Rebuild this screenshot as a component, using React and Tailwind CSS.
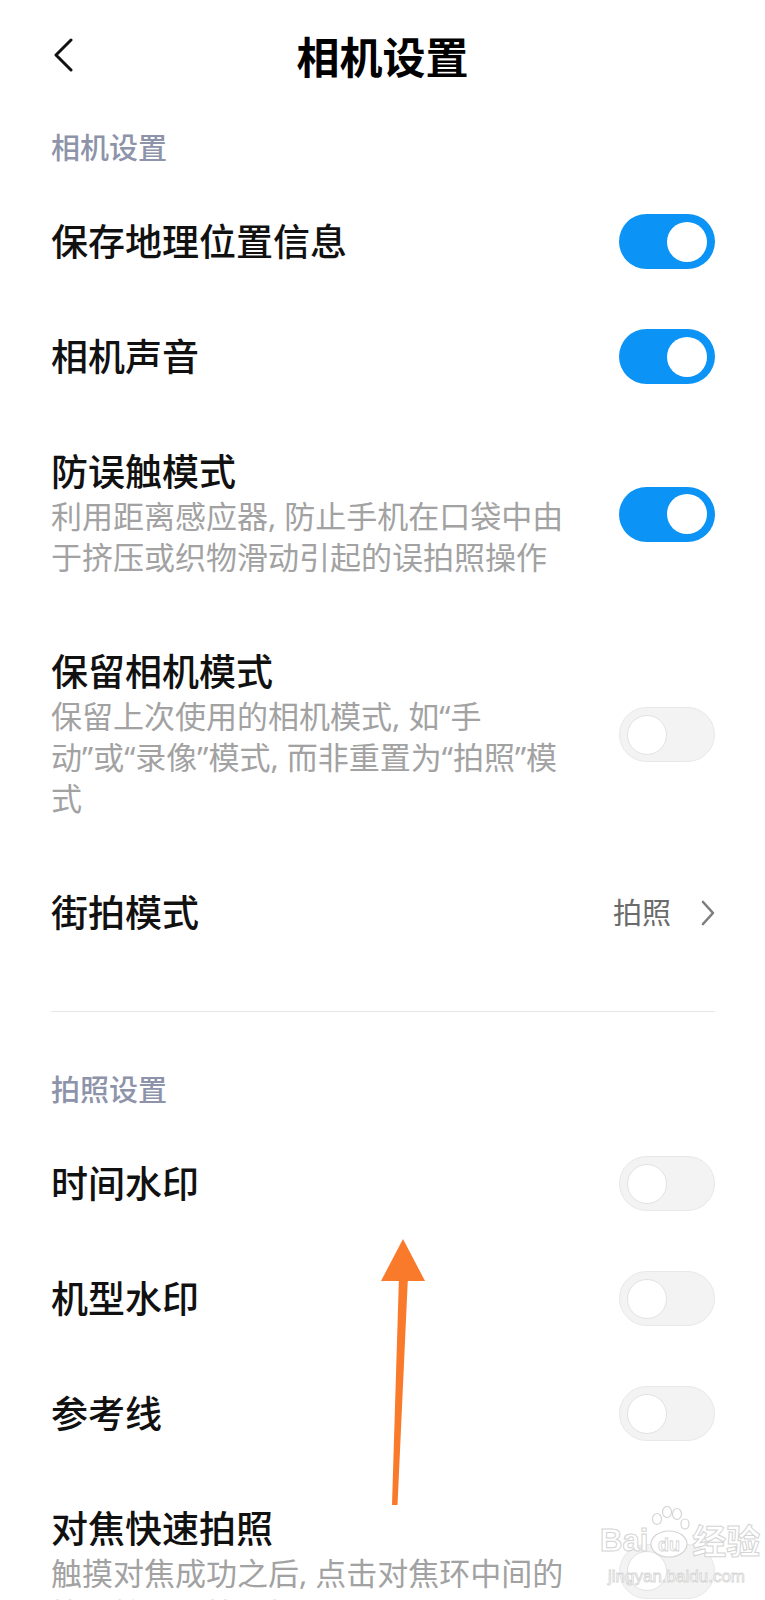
import React from "react";

const FONT = { fontFamily: '"Noto Sans", "Noto Sans CJK SC", sans-serif' };

function Toggle({ on }) {
  if (on) {
    return (
      <div className="w-[96px] h-[55px] rounded-full bg-[#0b93f6] flex items-center justify-end pr-[8px] shrink-0">
        <div className="w-[40px] h-[40px] rounded-full bg-white" />
      </div>
    );
  }
  return (
    <div className="w-[96px] h-[55px] rounded-full bg-[#f3f3f3] border border-[#e8e8e8] flex items-center justify-start pl-[7px] shrink-0">
      <div className="w-[40px] h-[40px] rounded-full bg-white border border-[#e2e2e2]" />
    </div>
  );
}

function SectionTitle({ children, className = "" }) {
  return (
    <div className={"pb-[18px] " + className}>
      <div className="h-[36px] flex items-center text-[29px] font-medium text-[#8d93a9]">{children}</div>
    </div>
  );
}

function Row({ title, lines = [], on, right }) {
  return (
    <div className="flex items-center justify-between py-[30px]">
      <div className="min-w-0 py-[6px]">
        <div className="h-[43px] flex items-center text-[37px] font-medium text-[#111]">{title}</div>
        {lines.length > 0 && (
          <div className="mt-[3px] text-[31px] text-[#a2a2a2] whitespace-nowrap">
            {lines.map((l, i) => (
              <div key={i} className="h-[41px] flex items-center">
                {l}
              </div>
            ))}
          </div>
        )}
      </div>
      {right ? right : <Toggle on={on} />}
    </div>
  );
}

export default function App() {
  return (
    <div className="relative w-[765px] h-[1600px] overflow-hidden bg-white" style={FONT}>
      {/* top bar */}
      <div className="grid grid-cols-[1fr_auto_1fr] items-center h-[116px] px-[51px]">
        <div className="flex items-center">
          <svg width="22" height="34" viewBox="0 0 22 34" className="ml-[1px] mb-[6px]">
            <polyline points="19,2 4,17 19,32" fill="none" stroke="#111" strokeWidth="3" strokeLinecap="round" strokeLinejoin="round" />
          </svg>
        </div>
        <div className="h-[52px] flex items-center text-[43px] font-bold text-black">相机设置</div>
        <div />
      </div>

      <div className="pl-[51px] pr-[50px]">
        <SectionTitle className="pt-[14px]">相机设置</SectionTitle>
        <Row title="保存地理位置信息" on />
        <Row title="相机声音" on />
        <Row
          title="防误触模式"
          lines={["利用距离感应器, 防止手机在口袋中由", "于挤压或织物滑动引起的误拍照操作"]}
          on
        />
        <Row
          title="保留相机模式"
          lines={["保留上次使用的相机模式, 如“手", "动”或“录像”模式, 而非重置为“拍照”模", "式"]}
        />
        <Row
          title="街拍模式"
          right={
            <div className="flex items-center gap-[30px]">
              <span className="h-[40px] flex items-center text-[29px] text-[#6b6b6b]">拍照</span>
              <svg width="14" height="26" viewBox="0 0 14 26">
                <polyline points="2,2 12,13 2,24" fill="none" stroke="#7d7d7d" strokeWidth="2.6" strokeLinecap="round" strokeLinejoin="round" />
              </svg>
            </div>
          }
        />

        <div className="mt-[41px] h-px bg-[#e6e6e6]" />

        <SectionTitle className="mt-[60px]">拍照设置</SectionTitle>
        <Row title="时间水印" />
        <Row title="机型水印" />
        <Row title="参考线" />
        <Row
          title="对焦快速拍照"
          lines={["触摸对焦成功之后, 点击对焦环中间的", "快门按钮可快速拍照"]}
        />
      </div>

      {/* orange annotation arrow */}
      <svg className="absolute left-0 top-0 pointer-events-none" width="765" height="1600" viewBox="0 0 765 1600">
        <polygon points="392,1505 397.5,1505 408,1276 399,1276" fill="#fa7a2b" />
        <polygon points="403,1239 381,1281 425,1281" fill="#fa7a2b" />
      </svg>

      {/* watermark */}
      <div className="absolute left-[600px] top-[1506px] pointer-events-none select-none whitespace-nowrap">
        <div className="flex items-end">
          <span className="text-[31px] leading-[34px] font-bold text-white [-webkit-text-stroke:1px_#d4d4d4]" style={{ fontFamily: '"Liberation Sans", sans-serif' }}>
            Bai
          </span>
          <svg width="42" height="52" viewBox="0 0 42 52" className="shrink-0">
            <g fill="white" stroke="#d4d4d4" strokeWidth="1.2">
              <ellipse cx="9" cy="13" rx="4.5" ry="5.5" />
              <ellipse cx="19" cy="6" rx="4.5" ry="5.5" />
              <ellipse cx="29" cy="8" rx="4.5" ry="5.5" />
              <ellipse cx="37" cy="18" rx="4" ry="5" />
              <ellipse cx="21" cy="38" rx="18" ry="13" />
            </g>
            <text x="21" y="45" textAnchor="middle" fontSize="18" fontWeight="bold" fill="white" stroke="#d4d4d4" strokeWidth="0.8" fontFamily="Liberation Sans, sans-serif">du</text>
          </svg>
          <span className="text-[34px] leading-[36px] font-bold text-white [-webkit-text-stroke:1px_#d4d4d4] ml-[2px]" style={{ fontFamily: '"Noto Sans CJK SC", sans-serif' }}>经验</span>
        </div>
        <div className="mt-[10px] ml-[8px] text-[17px] leading-[18px] text-white [-webkit-text-stroke:0.8px_#d4d4d4]" style={{ fontFamily: '"Liberation Sans", sans-serif' }}>
          jingyan.baidu.com
        </div>
      </div>
    </div>
  );
}
